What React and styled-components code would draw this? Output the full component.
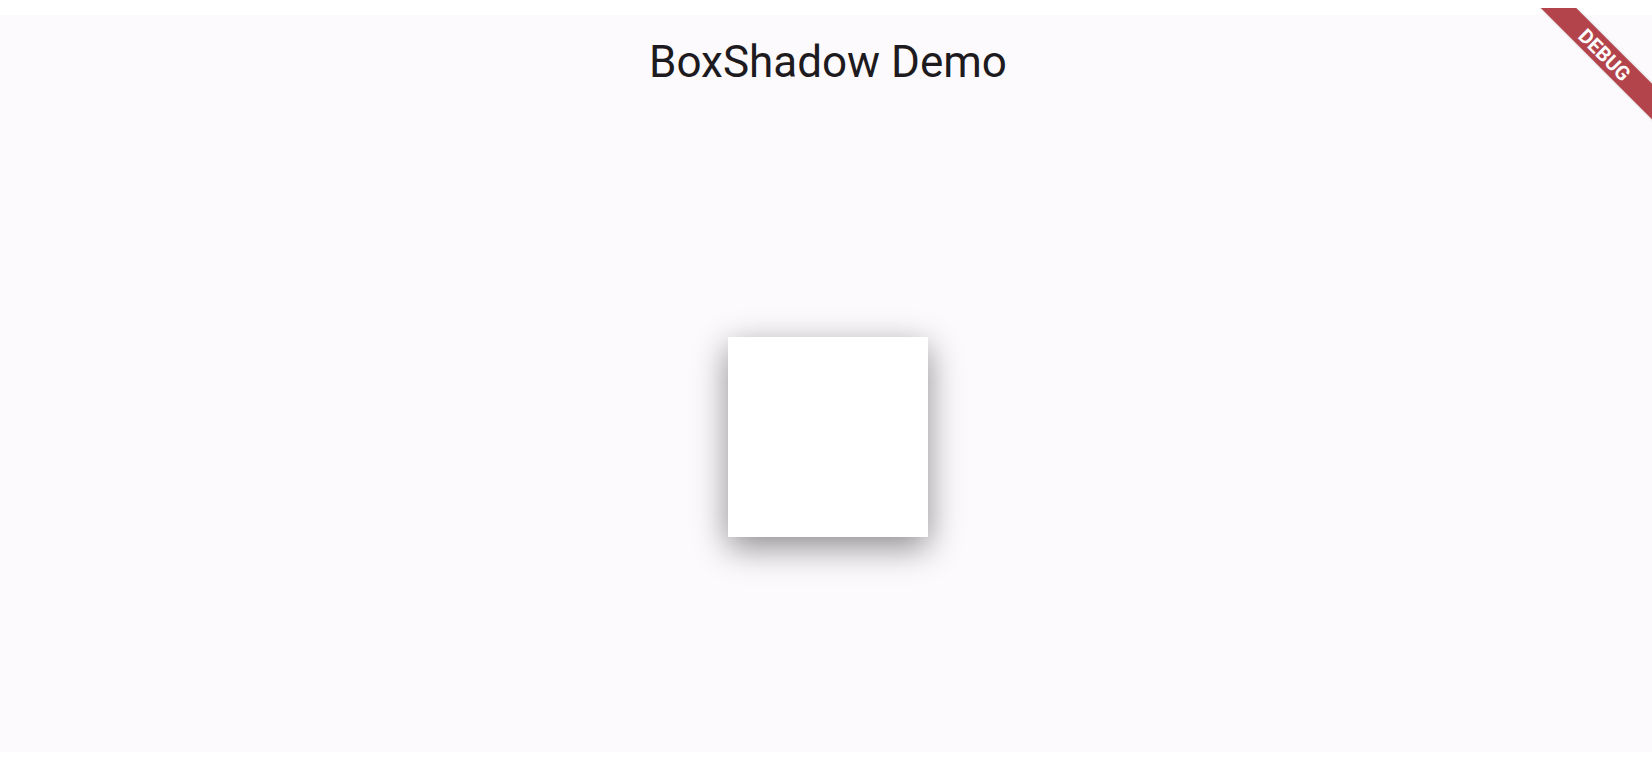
import styled, { createGlobalStyle } from 'styled-components';

const GlobalStyle = createGlobalStyle`
	html, body {
		margin: 0;
		padding: 0;
		background: #ffffff;
	}
	body {
		font-family: Roboto, "Noto Sans", "Liberation Sans", sans-serif;
	}
`;

const App = () => {
	return (
		<>
			<GlobalStyle />
			<Page>
				<Screen>
					<AppBar>
						<Title>BoxShadow Demo</Title>
					</AppBar>
					<Body>
						<ShadowBox />
					</Body>
				</Screen>
				<BannerClip>
					<Banner>DEBUG</Banner>
				</BannerClip>
			</Page>
		</>
	);
};

export default App;

/* Styles --- */

const Page = styled.div`
	position: relative;
	width: 100%;
	height: 768px;
	padding-top: 15px;
	box-sizing: border-box;
	overflow: hidden;
`;

const Screen = styled.div`
	display: flex;
	flex-direction: column;
	height: 737px;
	padding-left: 4px;
	background: #fdfafd;
`;

const AppBar = styled.header`
	display: flex;
	justify-content: center;
	height: 107px;
	padding-top: 25px;
	box-sizing: border-box;
`;

const Title = styled.h1`
	margin: 0;
	font-size: 44px;
	line-height: 44px;
	font-weight: 400;
	color: #1d1b20;
`;

const Body = styled.main`
	flex: 1;
	display: flex;
	justify-content: center;
	align-items: center;
`;

const ShadowBox = styled.div`
	width: 200px;
	height: 200px;
	background: #ffffff;
	box-shadow: 0 10px 32px rgba(0, 0, 0, 0.45);
`;

const BannerClip = styled.div`
	position: absolute;
	top: 8px;
	right: 0;
	width: 160px;
	height: 160px;
	overflow: hidden;
	pointer-events: none;
`;

const Banner = styled.div`
	position: absolute;
	left: 13px;
	top: 34px;
	width: 200px;
	height: 25px;
	display: flex;
	align-items: center;
	justify-content: center;
	transform: rotate(45deg);
	background: #b3444b;
	box-shadow: 0 0 3px rgba(0, 0, 0, 0.2);
	color: #ffffff;
	font-family: Roboto, "Liberation Sans", sans-serif;
	font-size: 20px;
	font-weight: 700;
`;
